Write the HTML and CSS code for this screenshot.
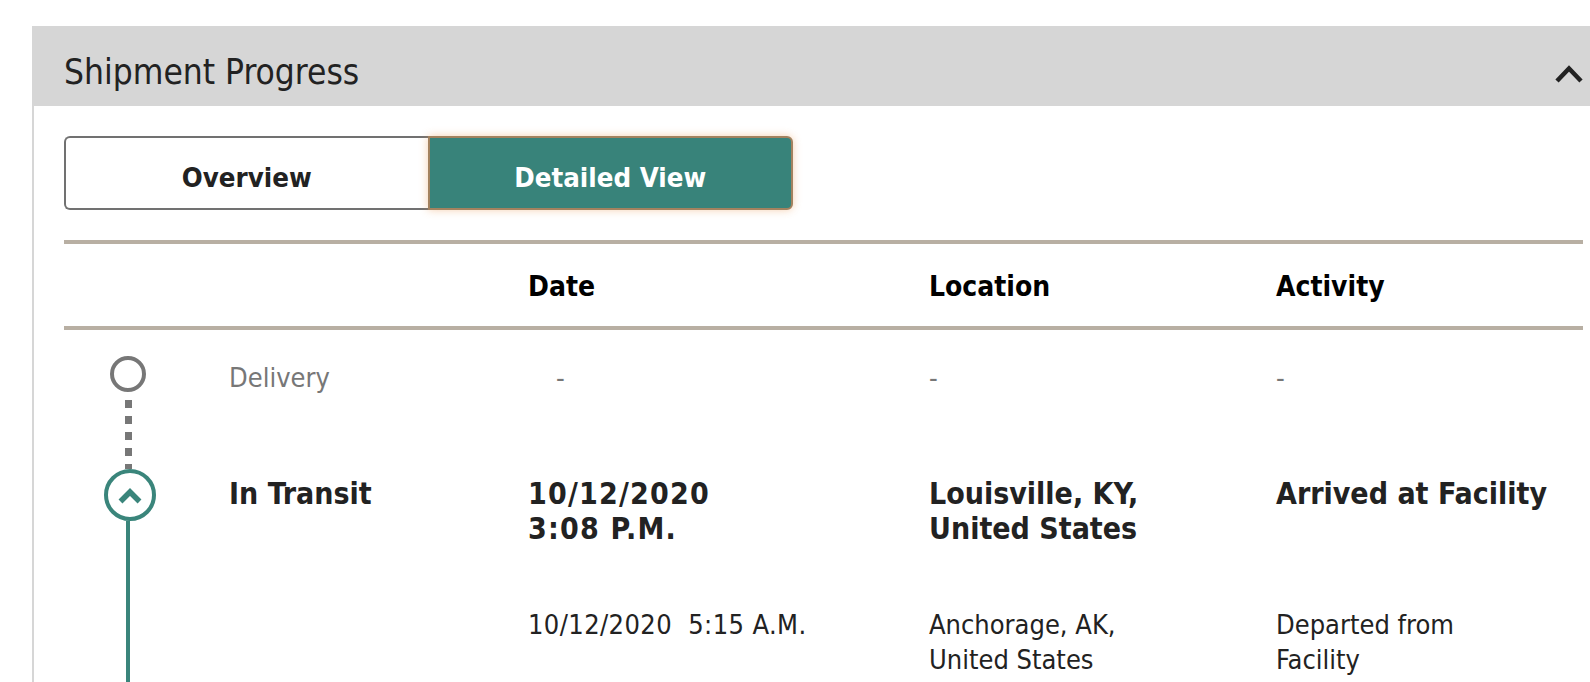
FILE: index.html
```html
<!DOCTYPE html>
<html lang="en">
<head>
<meta charset="utf-8">
<title>Shipment Progress</title>
<link rel="stylesheet" href="styles.css">
</head>
<body>
<section class="panel">
  <header class="panel-head">
    <h2 class="panel-title">Shipment Progress</h2>
    <svg class="collapse-icon" width="28" height="18" viewBox="0 0 28 18" aria-hidden="true">
      <polyline points="2,16 14,3.5 26,16" fill="none" stroke="#222" stroke-width="4.5" stroke-linejoin="miter"/>
    </svg>
  </header>
  <div class="panel-body">
    <div class="toggle">
      <button class="toggle-btn">Overview</button>
      <button class="toggle-btn is-active">Detailed View</button>
    </div>

    <div class="progress">
      <div class="progress-head">
        <div></div>
        <div></div>
        <div class="head-cell">Date</div>
        <div class="head-cell">Location</div>
        <div class="head-cell">Activity</div>
      </div>

      <div class="milestone milestone--pending">
        <div class="track">
          <span class="node"></span>
          <span class="connector connector--dotted"></span>
        </div>
        <div class="status">Delivery</div>
        <div class="cell cell--dash cell--date-dash">-</div>
        <div class="cell cell--dash">-</div>
        <div class="cell cell--dash">-</div>
      </div>

      <div class="milestone milestone--current">
        <div class="track track--span">
          <span class="node node--current">
            <svg width="26" height="18" viewBox="0 0 26 18" aria-hidden="true">
              <polyline points="3.5,14.5 13,5 22.5,14.5" fill="none" stroke="#3a857b" stroke-width="5.5" stroke-linejoin="miter"/>
            </svg>
          </span>
          <span class="connector connector--solid"></span>
        </div>
        <div class="status status--strong">In Transit</div>
        <div class="cell cell--strong cell--date">10/12/2020<br>3:08 P.M.</div>
        <div class="cell cell--strong">Louisville, KY,<br>United States</div>
        <div class="cell cell--strong">Arrived at Facility</div>

        <div class="status event"></div>
        <div class="cell event event--date">10/12/2020&nbsp;&nbsp;5:15 A.M.</div>
        <div class="cell event">Anchorage, AK,<br>United States</div>
        <div class="cell event">Departed from<br>Facility</div>
      </div>
    </div>
  </div>
</section>
</body>
</html>
```
FILE: styles.css
```css
html, body {
  margin: 0;
  padding: 0;
  overflow: hidden;
  background: #fff;
}

body {
  font-family: "DejaVu Sans Condensed", "DejaVu Sans", sans-serif;
  color: #222;
}

.panel {
  margin: 26px 0 0 32px;
  width: 1583px;
  border-left: 2px solid #d6d6d6;
  box-sizing: border-box;
}

.panel-head {
  height: 80px;
  background: #d6d6d6;
  display: flex;
  align-items: center;
  justify-content: space-between;
  padding: 0 32px 0 30px;
}

.panel-title {
  margin: 12px 0 0;
  font-size: 35px;
  font-weight: 400;
  color: #222;
  line-height: 40px;
}

.collapse-icon {
  display: block;
  margin-top: 16px;
}

.panel-body {
  padding: 30px 32px 0 30px;
}

.toggle {
  display: flex;
  width: 729px;
  height: 74px;
}

.toggle-btn {
  flex: 1;
  font-family: inherit;
  font-size: 27.4px;
  font-weight: 700;
  color: #222;
  background: #fff;
  border: 2px solid #717171;
  border-right: none;
  border-radius: 6px 0 0 6px;
  padding: 8px 0 0;
  margin: 0;
}

.toggle-btn.is-active {
  background: #38837a;
  color: #fff;
  border: 2px solid #a3825f;
  border-radius: 0 6px 6px 0;
  box-shadow: 0 0 9px rgba(236, 150, 80, 0.45);
}

.progress {
  margin-top: 30px;
}

.progress-head,
.milestone {
  display: grid;
  grid-template-columns: 128px 336px 401px 347px 1fr;
}

.progress-head {
  border-top: 4px solid #b8afa3;
  border-bottom: 4px solid #b8afa3;
  height: 82px;
  align-items: center;
}

.head-cell {
  font-size: 28px;
  font-weight: 700;
  color: #000;
  padding-top: 2px;
}

.milestone--pending {
  height: 139px;
}

.track {
  display: flex;
  flex-direction: column;
  align-items: center;
}

.track--span {
  grid-row: 1 / span 2;
}

.node {
  display: block;
  box-sizing: border-box;
  width: 36px;
  height: 36px;
  border: 4px solid #777;
  border-radius: 50%;
  margin-top: 26px;
  flex: none;
}

.node--current {
  width: 52px;
  height: 52px;
  margin: 0 0 0 4px;
  border-color: #3a857b;
  display: flex;
  align-items: center;
  justify-content: center;
}

.node--current svg {
  display: block;
  margin-top: 2px;
}

.connector {
  flex: 1;
  display: block;
}

.connector--dotted {
  width: 7px;
  background: repeating-linear-gradient(to bottom, transparent 0 8px, #777 8px 16px);
}

.connector--solid {
  width: 4px;
  background: #3a857b;
  min-height: 40px;
}

.status,
.cell {
  font-size: 27px;
  line-height: 34.5px;
}

.status {
  padding-left: 37px;
}

.milestone--pending .status,
.milestone--pending .cell {
  padding-top: 31px;
  color: #777;
}

.cell--dash {
  color: #666;
}

.cell--date-dash {
  padding-left: 28px;
}

.status--strong,
.cell--strong {
  font-size: 30px;
  font-weight: 700;
  padding-top: 8px;
  color: #222;
}

.cell--date {
  letter-spacing: 1.2px;
}

.event {
  padding-top: 62px;
  padding-bottom: 40px;
  color: #222;
}

.event--date {
  letter-spacing: 0.4px;
}
```
